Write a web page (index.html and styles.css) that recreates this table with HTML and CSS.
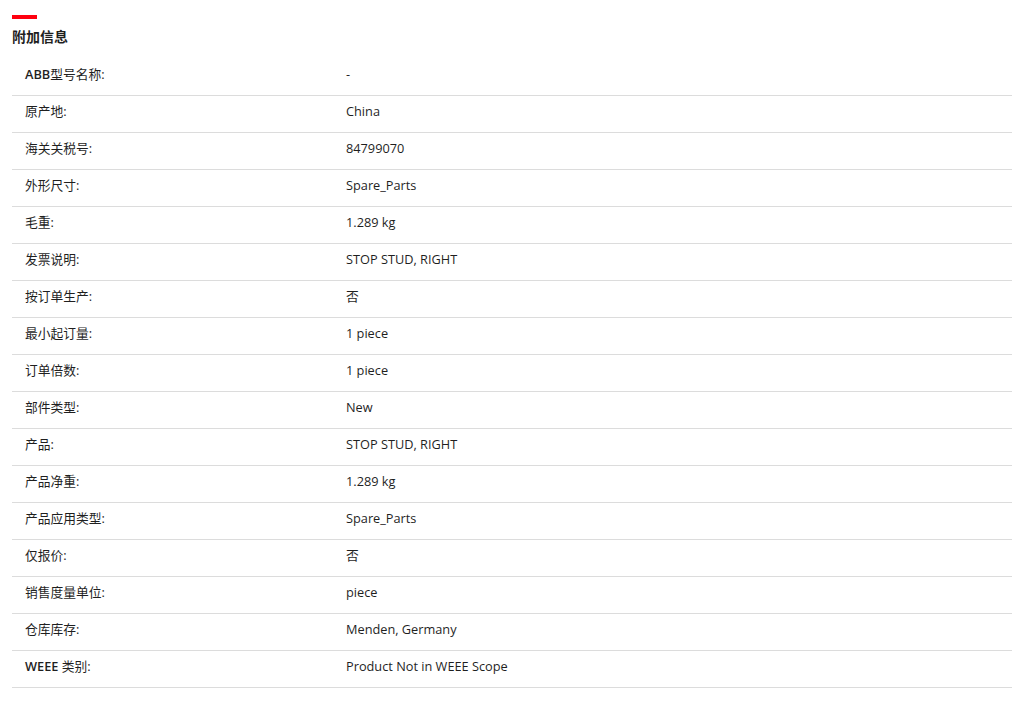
FILE: index.html
```html
<!DOCTYPE html>
<html lang="zh">
<head>
<meta charset="utf-8">
<link rel="stylesheet" href="styles.css">
</head>
<body>
<section class="info">
  <div class="accent"></div>
  <h2 class="title">附加信息</h2>
  <div class="table">
    <div class="row"><div class="label"><span class="latin">ABB</span>型号名称:</div><div class="value">-</div></div>
    <div class="row"><div class="label">原产地:</div><div class="value">China</div></div>
    <div class="row"><div class="label">海关关税号:</div><div class="value">84799070</div></div>
    <div class="row"><div class="label">外形尺寸:</div><div class="value">Spare_Parts</div></div>
    <div class="row"><div class="label">毛重:</div><div class="value">1.289 kg</div></div>
    <div class="row"><div class="label">发票说明:</div><div class="value">STOP STUD, RIGHT</div></div>
    <div class="row"><div class="label">按订单生产:</div><div class="value">否</div></div>
    <div class="row"><div class="label">最小起订量:</div><div class="value">1 piece</div></div>
    <div class="row"><div class="label">订单倍数:</div><div class="value">1 piece</div></div>
    <div class="row"><div class="label">部件类型:</div><div class="value">New</div></div>
    <div class="row"><div class="label">产品:</div><div class="value">STOP STUD, RIGHT</div></div>
    <div class="row"><div class="label">产品净重:</div><div class="value">1.289 kg</div></div>
    <div class="row"><div class="label">产品应用类型:</div><div class="value">Spare_Parts</div></div>
    <div class="row"><div class="label">仅报价:</div><div class="value">否</div></div>
    <div class="row"><div class="label">销售度量单位:</div><div class="value">piece</div></div>
    <div class="row"><div class="label">仓库库存:</div><div class="value">Menden, Germany</div></div>
    <div class="row"><div class="label"><span class="latin">WEEE</span> 类别:</div><div class="value">Product Not in WEEE Scope</div></div>
  </div>
</section>
</body>
</html>
```

FILE: styles.css
```css
html, body {
  margin: 0;
  padding: 0;
  background: #ffffff;
}
body {
  font-family: "Open Sans", "Noto Sans CJK SC", sans-serif;
  color: #1f1f1f;
}
.info {
  padding: 15px 10px 0 12px;
}
.accent {
  width: 25px;
  height: 4px;
  background: #ff000f;
}
.title {
  margin: 8px 0 0 0;
  font-size: 14px;
  line-height: 20px;
  font-weight: 700;
  color: #1f1f1f;
}
.table {
  margin-top: 12px;
  width: 1000px;
}
.row {
  display: grid;
  grid-template-columns: 334px 1fr;
  height: 36px;
  box-sizing: content-box;
  align-items: center;
  border-bottom: 1px solid #dcdcdc;
  font-size: 12.75px;
}
.row > div {
  padding-bottom: 7px;
}
.label {
  padding-left: 13px;
  font-weight: 400;
}
.latin {
  font-weight: 600;
}
.value {
  padding-left: 0;
}
```
